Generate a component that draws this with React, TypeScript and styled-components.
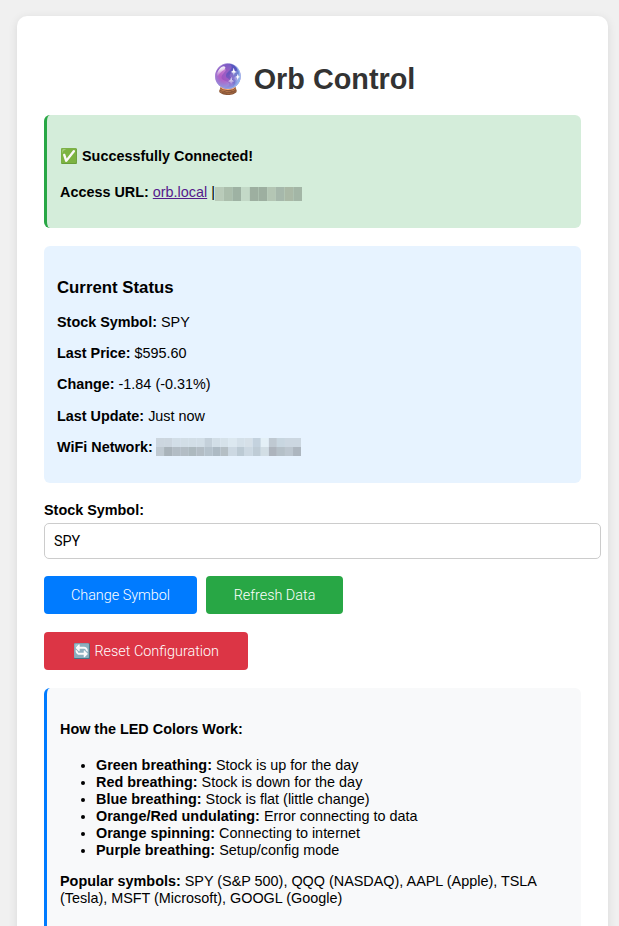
import React from 'react';
import styled, { createGlobalStyle } from 'styled-components';

const GlobalStyle = createGlobalStyle`
    html, body {
        margin: 0;
        padding: 0;
        background: #f0f0f0;
        overflow: hidden;
        height: 926px;
    }
    body {
        font-family: "Liberation Sans", Arial, sans-serif;
        font-size: 14.4px;
        line-height: 17px;
        color: #000;
    }
`;

const Page = styled.div`
    padding: 16px 11px 16px 17px;
`;

const Card = styled.main`
    background: #fff;
    border-radius: 10px;
    padding: 27px;
    box-shadow: 0 2px 10px rgba(0, 0, 0, 0.1);
`;

const Title = styled.h1`
    margin: 20px 0 19px;
    font-size: 28.8px;
    line-height: 33px;
    color: #333;
    text-align: center;
`;

const Box = styled.section<{ $bg: string; $accent?: string }>`
    background: ${({ $bg }) => $bg};
    border-left: ${({ $accent }) => ($accent ? `3px solid ${$accent}` : 'none')};
    border-radius: 6px;
    padding: 13px;
    margin-bottom: 18px;
`;

const Para = styled.p<{ $lead?: boolean }>`
    margin: 14.25px 0;
    padding-top: ${({ $lead }) => ($lead ? '1.5px' : '0')};
    line-height: ${({ $lead }) => ($lead ? '25.9px' : '17px')};
`;

const VisitedLink = styled.a`
    color: #551a8b;
`;

const Heading = styled.h3`
    margin: 15.5px 0 14.25px;
    font-size: 16.8px;
    line-height: 25px;
`;

const Mosaic = styled.svg`
    display: inline-block;
    vertical-align: -4px;
`;

const WifiMosaic = styled(Mosaic)`
    margin: -2px 0 0 -1px;
`;

const Field = styled.div`
    margin-bottom: 17px;
`;

const Label = styled.label`
    display: block;
    padding-top: 1px;
    font-weight: bold;
    margin-bottom: 4px;
`;

const Input = styled.input`
    display: block;
    box-sizing: content-box;
    width: 100%;
    height: 16px;
    padding: 9px;
    border: 1px solid #ccc;
    border-radius: 5px;
    background: #fff;
    color: #000;
    font: 14.4px "Roboto", sans-serif;
`;

const ButtonRow = styled.div`
    display: flex;
    gap: 9px;
    margin-bottom: 18px;
`;

const Button = styled.button<{ $bg: string; $width: number }>`
    width: ${({ $width }) => $width}px;
    height: 38px;
    padding: 0;
    border: none;
    border-radius: 4px;
    background: ${({ $bg }) => $bg};
    color: #fff;
    font: 300 14.4px "Roboto", sans-serif;
`;

const List = styled.ul`
    margin: 14.25px 0;
    padding-left: 36px;
`;

const wifiCells = [
    ['#ccd6df', '#ccd6df', '#d2dee7', '#d2dee7', '#d2dee7', '#d2dee7', '#c4d0da', '#d2dee7', '#d6e2ea', '#dce8f0', '#d4e0e9', '#d6e0e8', '#c4d2de', '#e4f0f7', '#bfc9d2', '#c8d6e0', '#ccd7e1', '#ccd7e1'],
    ['#bfc9d1', '#a9b3ba', '#b3bdc5', '#b3bdc5', '#adb9bf', '#b3bdc5', '#b5c2cc', '#adbac4', '#b5bfc5', '#ccd8e2', '#bccad4', '#ccd8e2', '#bfccd6', '#d2dee5', '#adb4bd', '#b5c0c8', '#bcc6cf', '#adb6bf'],
];

const urlCells = [
    '#b9cbb9', '#abbeac', '#9eb2a3', '#c3d9c7', '#9dafa0', '#9dafa0', '#b4c6b4', '#a6b8ab', '#aab9a6', '#a3b6a6',
];

export default function App() {
    return (
        <>
            <GlobalStyle />
            <Page>
                <Card>
                    <Title>🔮 Orb Control</Title>
                    <Box $bg="#d4edda" $accent="#28a745">
                        <Para $lead><strong>✅ Successfully Connected!</strong></Para>
                        <Para>
                            <strong>Access URL:</strong> <VisitedLink href="#">orb.local</VisitedLink> |
                            <Mosaic width="87" height="14" viewBox="0 0 87 14">
                                {urlCells.map((c, i) => <rect key={i} x={i * 8.7} width="8.7" height="14" fill={c} />)}
                            </Mosaic>
                        </Para>
                    </Box>
                    <Box $bg="#e7f3ff">
                        <Heading>Current Status</Heading>
                        <Para><strong>Stock Symbol:</strong> SPY</Para>
                        <Para><strong>Last Price:</strong> $595.60</Para>
                        <Para><strong>Change:</strong> -1.84 (-0.31%)</Para>
                        <Para><strong>Last Update:</strong> Just now</Para>
                        <Para>
                            <strong>WiFi Network:</strong>{' '}
                            <WifiMosaic width="145" height="18" viewBox="0 0 145 18">
                                {wifiCells.map((row, r) => row.map((c, i) => (
                                    <rect key={`${r}-${i}`} x={i * 8.06} y={r * 9} width="8.06" height="9" fill={c} />
                                )))}
                            </WifiMosaic>
                        </Para>
                    </Box>
                    <Field>
                        <Label htmlFor="symbol">Stock Symbol:</Label>
                        <Input id="symbol" defaultValue="SPY" />
                    </Field>
                    <ButtonRow>
                        <Button $bg="#007bff" $width={153}>Change Symbol</Button>
                        <Button $bg="#28a745" $width={137}>Refresh Data</Button>
                    </ButtonRow>
                    <ButtonRow>
                        <Button $bg="#dc3545" $width={204}>🔄 Reset Configuration</Button>
                    </ButtonRow>
                    <Box $bg="#f8f9fa" $accent="#007bff">
                        <Para $lead><strong>How the LED Colors Work:</strong></Para>
                        <List>
                            <li><strong>Green breathing:</strong> Stock is up for the day</li>
                            <li><strong>Red breathing:</strong> Stock is down for the day</li>
                            <li><strong>Blue breathing:</strong> Stock is flat (little change)</li>
                            <li><strong>Orange/Red undulating:</strong> Error connecting to data</li>
                            <li><strong>Orange spinning:</strong> Connecting to internet</li>
                            <li><strong>Purple breathing:</strong> Setup/config mode</li>
                        </List>
                        <Para><strong>Popular symbols:</strong> SPY (S&amp;P 500), QQQ (NASDAQ), AAPL (Apple), TSLA (Tesla), MSFT (Microsoft), GOOGL (Google)</Para>
                    </Box>
                </Card>
            </Page>
        </>
    );
}
